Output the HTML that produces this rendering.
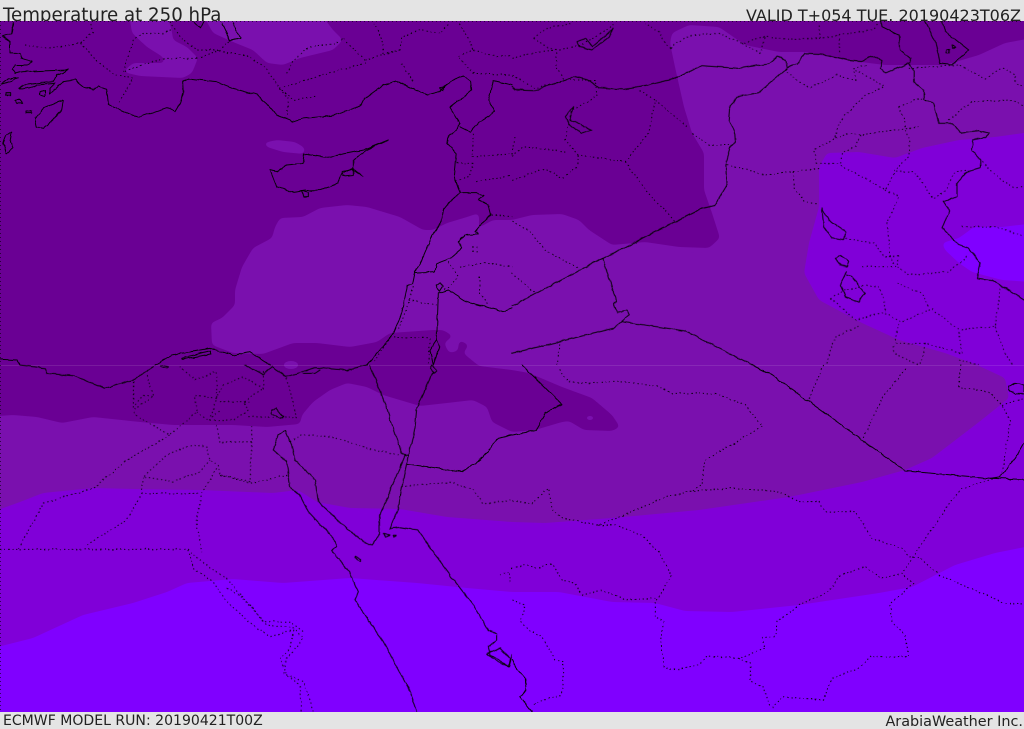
<!DOCTYPE html>
<html lang="en"><head><meta charset="utf-8"><title>Temperature at 250 hPa</title>
<style>
html,body{margin:0;padding:0;width:1024px;height:729px;overflow:hidden;background:#e4e4e4}
#w{position:relative;width:1024px;height:729px;font-family:"DejaVu Sans","Liberation Sans",sans-serif;color:#222}
.t{position:absolute;white-space:nowrap;line-height:1}
svg{position:absolute;left:0;top:0}
.c polyline{fill:none;stroke:#000;stroke-width:3;stroke-linejoin:round;stroke-linecap:round;opacity:.95}
.d polyline{fill:none;stroke:#000;stroke-width:3;stroke-dasharray:4 8;opacity:.9}
</style></head><body><div id="w">
<div class="t" style="left:3px;top:7px;font-size:18.2px">Temperature at 250 hPa</div>
<div class="t" style="right:3px;top:8px;font-size:16px">VALID T+054 TUE. 20190423T06Z</div>
<div class="t" style="left:3px;top:714px;font-size:14.05px">ECMWF MODEL RUN: 20190421T00Z</div>
<div class="t" style="right:1px;top:715px;font-size:14.4px">ArabiaWeather Inc.</div>
<svg width="1024" height="729" viewBox="0 0 1024 729">
<defs>
<clipPath id="m"><rect x="0" y="21" width="1024" height="691"/></clipPath>
<filter id="g" filterUnits="userSpaceOnUse" x="-40" y="-40" width="1110" height="800" color-interpolation-filters="sRGB">
<feGaussianBlur stdDeviation="2.5"/>
<feComponentTransfer><feFuncA type="linear" slope="12" intercept="-5.5"/></feComponentTransfer>
</filter>
<filter id="j" filterUnits="userSpaceOnUse" x="0" y="0" width="1024" height="729" color-interpolation-filters="sRGB">
<feTurbulence type="fractalNoise" baseFrequency="0.12" numOctaves="2" seed="4" result="n"/>
<feDisplacementMap in="SourceGraphic" in2="n" scale="3" xChannelSelector="R" yChannelSelector="G"/>
</filter>
</defs>
<g clip-path="url(#m)">
<rect x="0" y="21" width="1024" height="691" fill="#6a0094"/>
<g fill="#7a10ae" filter="url(#g)">
<path d="M-30 418L13 415 37 417 62 423 93 417 140 422 173 425 233 425 267 427 300 424 302 415 313 402 330 390 347 383 367 387 383 395 420 406 447 403 473 400 487 407 492 422 512 432 535 430 562 422 569 421 584 430 612 431 620 427 612 415 592 398 562 387 529 373 512 370 479 366 463 353 469 345 459 340 458 351 449 353 444 343 453 336 443 330 433 330 390 333 377 342 350 347 317 343 293 343 263 354 233 353 212 345 211 323 222 318 235 305 235 290 242 267 253 248 272 238 275 227 280 218 303 217 320 208 347 205 367 207 400 217 423 230 433 230 447 223 467 217 479 213 479 224 475 233 480 227 493 220 512 220 532 215 562 214 579 220 589 230 612 245 645 242 679 247 709 248 720 238 712 213 704 190 704 153 692 133 684 107 675 67 670 43 672 33 689 25 719 27 745 45 779 52 805 52 845 60 885 65 945 65 979 55 1005 43 1060 33 1060 750 -30 750Z"/>
<path d="M127 0L132 33 147 47 163 57 165 63 133 63 123 72 140 76 183 78 192 73 198 58 187 47 173 40 172 32 163 0Z"/>
<path d="M195 0L213 33 233 42 253 50 267 63 283 65 300 58 333 50 343 40 333 30 310 0Z"/>
<path d="M263 143L277 140 295 142 305 148 304 154 283 152 267 147Z"/>
</g>
<g fill="#7a10ae">
<ellipse cx="291" cy="365" rx="7" ry="4"/>
<ellipse cx="590" cy="418" rx="3" ry="2"/>
</g>
<path fill="#8000d8" filter="url(#g)" d="M-30 520L20 502 43 493 93 488 133 489 200 490 273 493 298 490 317 502 350 508 400 509 447 517 512 522 545 523 612 518 699 510 789 497 862 482 905 470 932 458 979 422 1009 398 1005 378 977 365 945 353 899 340 862 323 819 300 804 273 809 243 819 207 819 167 827 153 859 152 895 158 922 148 959 140 995 137 1060 128 1060 750 -30 750Z"/>
<g fill="#8000ff" filter="url(#g)">
<path d="M-30 654L33 638 83 615 133 603 167 592 187 583 233 579 283 583 350 578 417 583 467 588 512 592 532 592 559 592 612 602 655 603 685 611 732 612 799 605 879 593 912 587 955 565 995 553 1060 540 1060 750 -30 750Z"/>
<path d="M942 243L959 238 974 227 1002 227 1060 220 1060 284 1002 280 972 272 959 263 945 250Z"/>
</g>
<rect x="0" y="365" width="1024" height="1" fill="#fff" opacity=".1"/>
<line x1=".5" y1="21" x2=".5" y2="712" stroke="#000" stroke-dasharray="1 3" opacity=".6"/>
<line x1="0" y1="21.5" x2="1024" y2="21.5" stroke="#000" stroke-dasharray="1 3" opacity=".6"/>

<g filter="url(#j)">
<!-- top-left quadrant -->
<g transform="scale(.33333)">
<g class="d">
<polyline points="1030,118 1090,175 1095,190 1000,215 920,240 840,265 880,300 950,290"/>
<polyline points="75,135 160,145 240,130 280,95 270,65"/>
<polyline points="240,130 300,190 345,225 400,235 355,310"/>
<polyline points="370,215 400,120 430,100 490,100 515,90"/>
<polyline points="590,175 500,175 440,190 370,215"/>
<polyline points="590,175 660,150 690,122"/>
<polyline points="510,65 540,110 590,150 660,150"/>
<polyline points="670,155 750,170 800,205 840,265 865,300 860,355"/>
<polyline points="860,220 880,180 930,140 1000,130 1030,118"/>
<polyline points="1095,180 1200,150 1205,110 1260,90 1320,100 1350,70"/>
<polyline points="1120,70 1145,110 1150,160 1200,150"/>
<polyline points="1205,190 1240,245"/>
<polyline points="1380,70 1420,150 1375,170 1420,220 1536,225"/>
<polyline points="1420,150 1490,170 1536,165"/>
<polyline points="1420,400 1415,470 1470,465 1536,460"/>
<polyline points="1370,490 1420,490 1410,530 1360,545"/>
<polyline points="1430,545 1536,525"/>
<polyline points="1475,645 1536,650"/>
<polyline points="1345,785 1375,830 1350,860 1330,870"/>
<polyline points="1380,800 1460,790 1536,800"/>
<polyline points="1440,830 1440,880 1465,915"/>
<polyline points="1240,860 1225,910 1195,990"/>
<polyline points="1225,900 1310,915"/>
<polyline points="1420,740 1420,760"/>
<polyline points="1430,740 1430,760"/>
<polyline points="1170,1010 1290,1015 1285,1090"/>
<polyline points="1170,1010 1120,1090"/>
</g>
<g class="c">
<polyline points="40,65 35,100 5,110"/>
<polyline points="5,110 30,125 30,160 60,160 65,175 95,185 80,195 45,195 35,210 45,220 70,215 205,210 170,225 160,245 110,250 70,255 55,265 90,265 110,255 165,250 150,265 150,282 190,245 225,240 250,260 280,270 295,258 320,268 325,310 360,330 395,345 420,350 500,323 525,335 540,310 550,280 548,245 565,236 650,245 700,265 770,285 800,310 830,345 880,365 910,355 1000,347 1065,325 1085,315 1095,295 1150,255 1190,243 1220,258 1280,285 1320,275 1330,262 1360,240 1390,228 1412,245 1415,270 1385,295 1350,322 1380,370 1370,385 1345,410 1342,432 1370,460 1363,530 1380,578 1350,605 1330,630 1325,665 1300,700 1270,770 1245,818 1238,852 1222,858 1205,940 1180,1000 1130,1060 1100,1095"/>
<polyline points="1380,578 1430,578 1450,585 1435,600 1465,615 1473,645 1450,665 1425,695 1437,703 1395,705 1375,725 1385,745 1350,775 1310,790 1305,815 1245,818"/>
<polyline points="1380,380 1410,395 1437,365 1485,335 1465,300 1480,242 1536,255"/>
<polyline points="1310,1020 1315,880 1345,870 1400,905 1510,935 1536,925"/>
<polyline points="1310,855 1320,847 1328,860 1318,875 1310,865 1310,855"/>
<polyline points="1310,1020 1318,1040 1300,1095 1290,1050 1310,1020"/>
<polyline points="665,68 690,122 722,115 700,70"/>
<polyline points="580,65 600,85 610,65"/>
<polyline points="5,250 25,235 55,232 30,245 5,252"/>
<polyline points="110,380 105,355 130,325 190,300 185,330 160,360 130,385 110,380"/>
<polyline points="18,278 32,278 32,284 18,284 18,278"/>
<polyline points="45,300 60,300 68,310 50,310 45,300"/>
<polyline points="78,333 95,332 95,338 78,338 78,333"/>
<polyline points="120,275 135,270 135,290 120,285 120,275"/>
<polyline points="35,395 20,405 10,430 20,460 38,445 30,425 35,395"/>
<polyline points="1165,420 1090,450 1040,460 980,472 912,462 908,490 860,495 830,515 810,510 830,560 880,577 915,572 960,570 1015,550 1025,520 1060,505 1090,530 1060,510 1060,480 1100,450 1165,420"/>
<polyline points="1025,515 1060,508 1060,525 1030,528 1025,515"/>
<polyline points="900,572 925,578 925,590 912,590 905,575"/>
<polyline points="1320,262 1335,258 1328,272 1320,262"/>
<polyline points="0,1078 50,1080 60,1095"/>
<polyline points="465,1095 515,1065 630,1045 700,1065 750,1055 810,1095"/>
<polyline points="545,1075 600,1060 630,1052 630,1062 590,1070 545,1078"/>
</g>
</g>

<!-- top-right quadrant -->
<g transform="translate(512,0) scale(.33333)">
<g class="d">
<polyline points="0,175 80,155 135,150 130,200 160,240 250,240 255,290 180,330 160,420 200,465 340,485 410,400 430,300 380,270"/>
<polyline points="130,150 200,140 300,80 310,70"/>
<polyline points="160,240 70,265 0,225"/>
<polyline points="430,300 530,385"/>
<polyline points="540,400 590,435 660,435"/>
<polyline points="200,465 195,500 150,535 100,505 0,540"/>
<polyline points="160,455 30,440 0,470 10,405"/>
<polyline points="340,485 400,570 490,665"/>
<polyline points="0,665 50,690 100,750 200,805"/>
<polyline points="0,820 70,880"/>
<polyline points="475,145 490,130 540,105 620,100 690,130 760,110 850,118 925,115 980,105 1080,90 1100,70"/>
<polyline points="475,145 460,130 440,95 400,70"/>
<polyline points="65,115 100,85 180,70"/>
<polyline points="65,115 100,140 130,150"/>
<polyline points="690,130 745,160 760,110"/>
<polyline points="980,105 985,165"/>
<polyline points="920,75 925,115"/>
<polyline points="820,205 850,240 895,262 975,225 1030,240 1025,205 1070,195"/>
<polyline points="1030,210 1120,260 1060,285 1000,345 975,380 970,415 905,450 915,490 985,490"/>
<polyline points="970,415 1010,400 1045,405 1180,385 1220,380"/>
<polyline points="1045,405 1030,440 990,460 985,495 1120,570 1150,515 1205,515 1225,540 1265,595 1300,570 1330,515 1370,510"/>
<polyline points="1120,570 1160,590 1125,670 1135,770 1150,800 1050,800"/>
<polyline points="1180,390 1195,430 1190,470 1140,520"/>
<polyline points="1160,320 1220,295 1265,310"/>
<polyline points="1160,320 1180,370 1180,385"/>
<polyline points="1310,360 1380,305 1500,300 1536,320"/>
<polyline points="1190,205 1340,195 1420,235 1470,205 1510,225 1510,250 1536,260"/>
<polyline points="1410,485 1470,540 1510,565 1536,560"/>
<polyline points="645,495 760,525 845,515 925,505"/>
<polyline points="845,515 845,565 880,605 915,610"/>
<polyline points="1000,715 1090,730 1115,770 1160,770 1155,800 1190,825 1310,815 1370,765"/>
<polyline points="1350,680 1450,680 1536,710"/>
<polyline points="1005,870 1060,855 1100,860 1115,895 1120,940 1170,965 1260,925 1340,990 1350,1060 1240,1030 1150,1030 1160,970"/>
<polyline points="1155,850 1230,880 1250,920"/>
<polyline points="955,895 1000,870"/>
<polyline points="955,895 1030,960 1120,935"/>
<polyline points="1040,980 970,1010 940,1095"/>
<polyline points="1465,865 1450,980 1340,990"/>
<polyline points="1450,980 1480,1060 1500,1095"/>
<polyline points="135,1095 145,1030"/>
<polyline points="1240,1030 1225,1095"/>
<polyline points="1145,1040 1145,1060 1220,1095"/>
<polyline points="1340,1080 1400,1095"/>
</g>
<g class="c">
<polyline points="0,260 10,270 65,272 130,250 190,230 230,240 260,263 335,268 400,258 490,235 570,197 680,205 770,190 798,168 820,180 825,205 740,278 675,290 653,320 650,360 668,395 670,425 655,445 643,490 645,555 608,617 570,625 272,775 0,918"/>
<polyline points="272,775 315,907 305,910 315,937 345,930 352,945 305,985 0,1060"/>
<polyline points="330,965 520,993 720,1095"/>
<polyline points="825,200 855,192 880,160 930,162 1010,180 1050,183 1080,168 1110,180 1105,205 1120,220 1190,190 1205,210 1205,245 1235,270 1235,300 1265,310 1280,370 1320,370 1345,398 1400,392 1432,400 1420,412 1382,420 1378,450 1405,480 1405,505 1365,515 1335,550 1335,590 1295,605 1312,630 1290,685 1340,735 1370,745 1405,790 1395,835 1440,840 1536,900"/>
<polyline points="1108,65 1110,80 1160,105 1165,150 1195,175 1195,190"/>
<polyline points="1240,65 1270,125 1285,190 1320,195 1370,150 1300,95 1290,65"/>
<polyline points="1305,150 1312,148 1312,160 1305,160 1305,150"/>
<polyline points="1320,135 1330,140 1320,145 1320,135"/>
<polyline points="195,125 220,115 240,140 305,85 290,110 240,150 200,140 195,125"/>
<polyline points="160,350 185,320 175,360 240,390 205,400 170,370 160,350"/>
<polyline points="930,625 950,660 1000,695 995,720 960,715 935,680 930,625"/>
<polyline points="970,775 985,765 1010,785 1005,800 985,795 970,775"/>
<polyline points="1005,815 1000,825 985,855 1000,890 1040,905 1060,880 1020,830 1005,825"/>
</g>
</g>

<!-- bottom-left quadrant -->
<g transform="translate(0,365) scale(.33333)">
<g class="d">
<polyline points="400,50 400,125 430,90 460,95 405,130 405,150 510,210 590,140 585,90 650,100 670,60 730,35 790,70 790,20"/>
<polyline points="440,30 460,95"/>
<polyline points="540,5 585,45 650,20 650,100 630,165 660,135"/>
<polyline points="590,140 625,165 700,165 745,135 730,110 790,70"/>
<polyline points="745,155 890,158 860,35"/>
<polyline points="660,110 750,110"/>
<polyline points="650,180 660,232 755,230 755,180"/>
<polyline points="755,230 750,350 660,330 655,300 630,285 620,245 580,238 500,270 430,335 520,350 600,320 630,285"/>
<polyline points="510,210 380,285 280,370 130,415 55,550"/>
<polyline points="430,335 425,385 600,385"/>
<polyline points="425,385 380,465 260,540"/>
<polyline points="650,310 605,385 590,470 605,560"/>
<polyline points="0,553 565,553 605,590 680,640 800,780 880,790 910,820 860,880 850,925 910,950 940,1040"/>
<polyline points="565,553 580,610 640,650 680,710 770,790 810,815 880,795 870,850 840,880 860,930 900,960 905,1040"/>
<polyline points="680,670 720,690 790,770 870,770 910,800"/>
<polyline points="660,330 750,355 865,330"/>
<polyline points="870,230 910,210 1000,215 1100,250 1200,270"/>
<polyline points="1205,365 1350,352 1420,375 1450,415 1536,405"/>
<polyline points="1500,630 1530,620 1530,660"/>
</g>
<g class="c">
<polyline points="60,0 135,10 140,25 220,32 315,70 400,45 460,5"/>
<polyline points="480,0 505,5 500,10 480,5"/>
<polyline points="735,0 790,30 815,5 860,35 945,8 1040,15 1100,0"/>
<polyline points="910,25 945,25 960,15"/>
<polyline points="855,195 835,210 820,255 860,290 870,365 900,390 925,440 1000,520 1010,545 995,555 1050,625 1075,680 1065,705 1150,830 1225,970 1250,1040"/>
<polyline points="855,195 875,240 885,285 945,345 955,410 1040,490 1090,530 1115,540 1140,505 1140,450 1190,330 1215,270"/>
<polyline points="1225,270 1205,370 1195,430 1170,490 1200,487 1255,495 1305,570 1350,630 1420,720 1465,797 1490,805 1490,825 1465,845 1470,870 1525,905 1536,870"/>
<polyline points="1110,0 1160,130 1205,265 1215,275 1225,270 1245,190 1250,130 1300,20"/>
<polyline points="1300,25 1310,15 1295,0 1290,10 1300,25"/>
<polyline points="1222,297 1390,320 1450,275 1495,220 1536,210"/>
<polyline points="815,135 830,130 850,155 840,160 815,145 815,135"/>
<polyline points="1150,505 1170,510 1155,515 1150,505"/>
<polyline points="1178,512 1188,512 1180,518 1178,512"/>
<polyline points="1065,575 1080,580 1080,588 1065,578"/>
<polyline points="1460,865 1500,850 1530,880 1525,905 1490,890 1460,865"/>
</g>
</g>

<!-- bottom-right quadrant -->
<g transform="translate(512,365) scale(.33333)">
<g class="d">
<polyline points="140,15 170,50 230,55 320,48 440,65 480,85 610,85 700,120 750,185 580,285 570,360 540,378 670,370 800,380 860,410 920,410 940,440 1030,440 1080,520 1170,550 1190,575 1225,580 1280,630 1400,680 1480,715 1536,715"/>
<polyline points="0,408 60,415 110,370 120,430 150,460 260,480 340,450 460,395 540,378"/>
<polyline points="260,480 310,480 390,510 440,560 480,630 430,710 430,755 455,770 445,830 455,905 480,915 560,900 585,873 680,880 760,850 750,820 790,815 795,770 860,720 950,680 985,630 1060,605 1110,640 1170,625 1205,655 1135,715 1140,770 1180,810 1190,875 1075,875 1040,910 960,940 935,1005 810,995 780,1030"/>
<polyline points="680,880 715,895 715,950 755,965 775,1030"/>
<polyline points="0,610 40,598 75,610 120,595 150,645 190,655 210,690 270,675 340,705 430,700"/>
<polyline points="0,705 40,720 25,770 50,795 90,815 130,885 155,890 150,990 110,1000 60,1020"/>
<polyline points="1465,335 1350,370 1320,405 1220,550 1170,625"/>
<polyline points="935,0 890,105"/>
<polyline points="1180,10 1110,100 1050,225"/>
<polyline points="1345,0 1340,65 1430,80 1470,120 1495,170 1470,320"/>
<polyline points="1470,120 1536,100"/>
</g>
<g class="c">
<polyline points="30,0 150,118 100,145 70,197 0,210"/>
<polyline points="720,0 780,30 1180,318 1440,340 1536,343"/>
<polyline points="1435,340 1465,335 1510,280 1536,235"/>
<polyline points="0,885 10,905 40,940 42,975 25,995 60,1040"/>
<polyline points="1490,65 1510,55 1536,60 1536,85 1510,85 1490,75 1490,65"/>
</g>
</g>
</g>
</g>
</svg>
</div></body></html>
